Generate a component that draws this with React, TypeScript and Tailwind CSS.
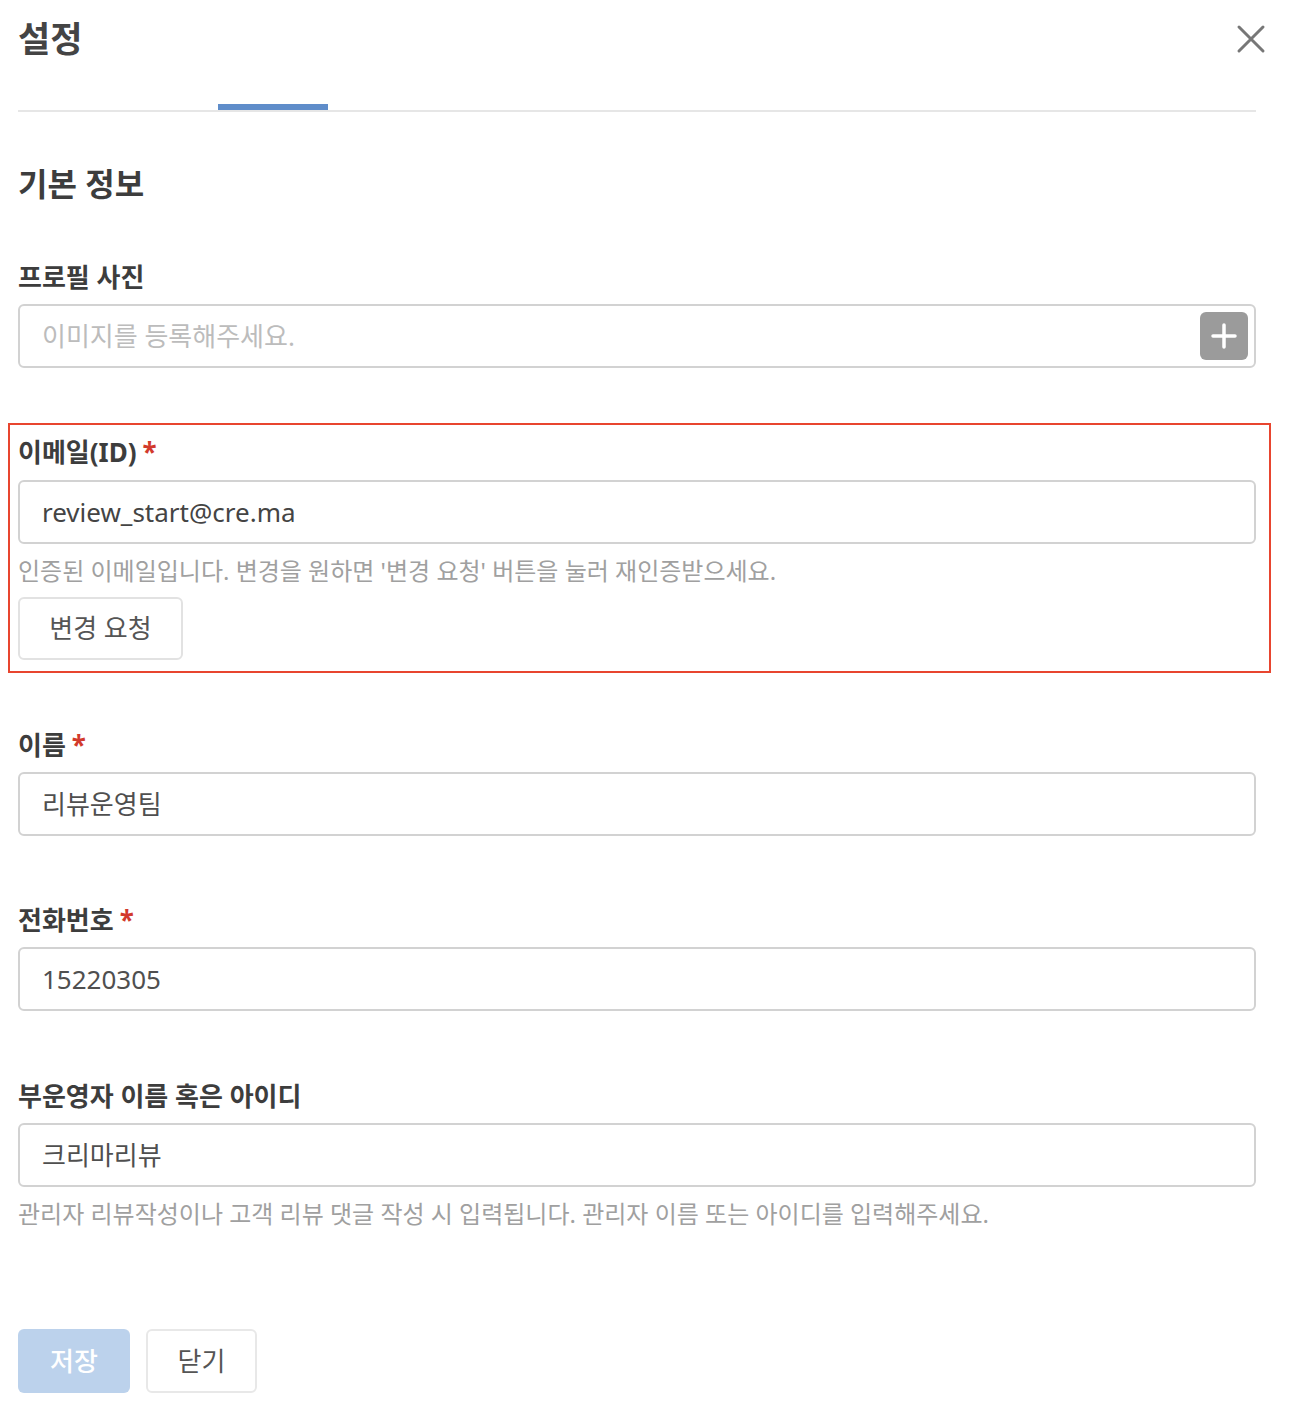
const font = { fontFamily: '"Noto Sans", "Noto Sans CJK KR", sans-serif' };

function Label({ text, required }: { text: string; required?: boolean }) {
  return (
    <div className="text-[26px] leading-[36px] font-bold text-[#3d3d3d]">
      {text}
      {required && <span className="text-[#d23a2c] ml-[6px]">*</span>}
    </div>
  );
}

function TextBox({ value, placeholder }: { value?: string; placeholder?: string }) {
  return (
    <div className="mt-[9px] h-[64px] border-2 border-[#d2d2d2] rounded-[6px] pl-[22px] flex items-center text-[26px]">
      {value ? (
        <span className="text-[#4f4f4f]">{value}</span>
      ) : (
        <span className="text-[#bcbcbc]">{placeholder}</span>
      )}
    </div>
  );
}

export default function App() {
  return (
    <div className="bg-white w-[1298px] min-h-[1410px] pl-[18px]" style={font}>
      {/* header */}
      <div className="flex justify-between items-start pt-[17px] pr-[32px]">
        <h1 className="text-[35px] leading-[44px] font-bold text-[#444]">설정</h1>
        <button className="mt-[7px]" aria-label="close">
          <svg width="30" height="30" viewBox="0 0 30 30">
            <path d="M3 3 L27 27 M27 3 L3 27" stroke="#777" strokeWidth="3" strokeLinecap="round" />
          </svg>
        </button>
      </div>

      {/* tabs */}
      <div className="mr-[42px] mt-[43px]">
        <div className="ml-[200px] w-[110px] h-[6px] bg-[#5f8dca]" />
        <div className="h-[2px] bg-[#e6e6e6]" />
      </div>

      <div className="mr-[42px]">
        <h2 className="mt-[52px] text-[32px] leading-[40px] font-bold text-[#3d3d3d]">기본 정보</h2>

        {/* profile */}
        <div className="mt-[55px]">
          <Label text="프로필 사진" />
          <div className="mt-[9px] h-[64px] border-2 border-[#d2d2d2] rounded-[6px] pl-[22px] pr-[6px] flex items-center justify-between text-[26px]">
            <span className="text-[#bcbcbc]">이미지를 등록해주세요.</span>
            <div className="w-[48px] h-[48px] rounded-[6px] bg-[#9b9b9b] flex items-center justify-center">
              <svg width="26" height="26" viewBox="0 0 26 26">
                <path d="M13 2 V24 M2 13 H24" stroke="#fff" strokeWidth="3.5" strokeLinecap="round" />
              </svg>
            </div>
          </div>
        </div>

        {/* email (highlighted) */}
        <div className="mt-[55px] -ml-[10px] -mr-[15px] border-2 border-[#e8452f] pl-[8px] pr-[13px] pt-[9px] pb-[11px]">
          <Label text="이메일(ID)" required />
          <div className="mt-[10px] h-[64px] border-2 border-[#d2d2d2] rounded-[6px] pl-[22px] flex items-center text-[26px] text-[#444]">
            review_start@cre.ma
          </div>
          <p className="mt-[11px] text-[24px] leading-[32px] text-[#a0a0a0]">
            인증된 이메일입니다. 변경을 원하면 '변경 요청' 버튼을 눌러 재인증받으세요.
          </p>
          <button className="mt-[10px] w-[165px] h-[63px] border-2 border-[#e2e2e2] rounded-[6px] text-[26px] text-[#555]">
            변경 요청
          </button>
        </div>

        {/* name */}
        <div className="mt-[54px]">
          <Label text="이름" required />
          <TextBox value="리뷰운영팀" />
        </div>

        {/* phone */}
        <div className="mt-[66px]">
          <Label text="전화번호" required />
          <TextBox value="15220305" />
        </div>

        {/* sub operator */}
        <div className="mt-[67px]">
          <Label text="부운영자 이름 혹은 아이디" />
          <TextBox value="크리마리뷰" />
          <p className="mt-[11px] text-[24px] leading-[32px] text-[#a0a0a0]">
            관리자 리뷰작성이나 고객 리뷰 댓글 작성 시 입력됩니다. 관리자 이름 또는 아이디를 입력해주세요.
          </p>
        </div>

        {/* actions */}
        <div className="mt-[99px] flex gap-[16px]">
          <button className="w-[112px] h-[64px] rounded-[6px] bg-[#bcd2ec] text-white text-[26px] font-medium">
            저장
          </button>
          <button className="w-[111px] h-[64px] rounded-[6px] border-2 border-[#e8e8e8] text-[#555] text-[26px]">
            닫기
          </button>
        </div>
      </div>
    </div>
  );
}
